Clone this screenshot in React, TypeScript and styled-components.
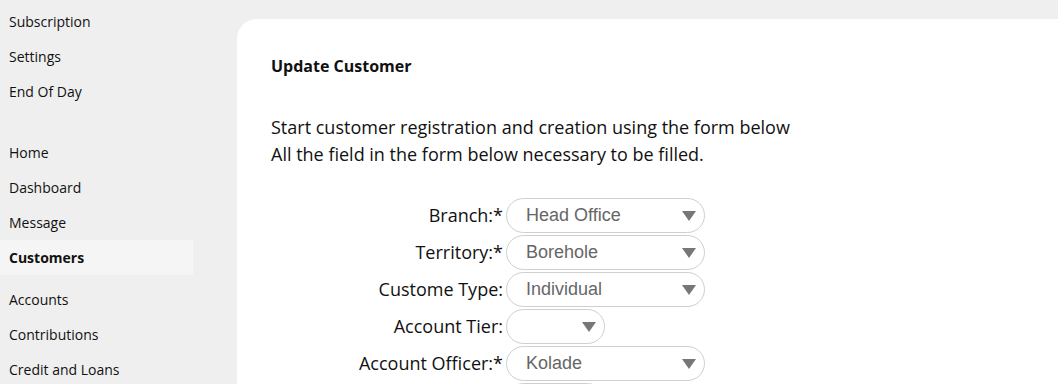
import React from "react";
import styled, { createGlobalStyle } from "styled-components";

type Field = {
  label: string;
  value: string;
  required?: boolean;
  narrow?: boolean;
};

const fields: Field[] = [
  { label: "Branch:", value: "Head Office", required: true },
  { label: "Territory:", value: "Borehole", required: true },
  { label: "Custome Type:", value: "Individual" },
  { label: "Account Tier:", value: "", narrow: true },
  { label: "Account Officer:", value: "Kolade", required: true },
  { label: "", value: "", narrow: true },
];

const menuTop = ["Subscription", "Settings", "End Of Day"];
const menuMain = ["Home", "Dashboard", "Message", "Customers", "Accounts", "Contributions", "Credit and Loans"];

const GlobalStyle = createGlobalStyle`
  html, body {
    margin: 0;
    padding: 0;
    background: #efefef;
    overflow: hidden;
  }
  body {
    font-family: "Open Sans", "Noto Sans", sans-serif;
    color: #111;
  }
`;

const Page = styled.div`
  display: flex;
  width: 1058px;
  height: 384px;
  overflow: hidden;
`;

const Sidebar = styled.nav`
  width: 237px;
  flex-shrink: 0;
  padding-top: 4px;
  display: flex;
  flex-direction: column;
`;

const MenuGroup = styled.ul`
  list-style: none;
  margin: 0 0 26px 0;
  padding: 0;
`;

const MenuItem = styled.li<{ $active?: boolean }>`
  width: 193px;
  height: 35px;
  display: flex;
  align-items: center;
  padding-left: 9px;
  box-sizing: border-box;
  font-size: 14px;
  font-weight: ${(p) => (p.$active ? 700 : 400)};
  background: ${(p) => (p.$active ? "#f5f5f5" : "transparent")};
  margin-bottom: ${(p) => (p.$active ? "7px" : "0")};
`;

const Main = styled.main`
  flex: 1;
  padding-top: 19px;
`;

const Card = styled.section`
  background: #fff;
  border-top-left-radius: 20px;
  height: 100%;
  padding: 36px 34px 0 34px;
  box-sizing: border-box;
`;

const Title = styled.h2`
  margin: 0;
  font-size: 16px;
  line-height: 22px;
  font-weight: 700;
`;

const Intro = styled.p`
  margin: 37px 0 30px 0;
  font-size: 18px;
  line-height: 27px;
`;

const Form = styled.div`
  display: grid;
  grid-template-columns: 232px auto;
  column-gap: 3px;
  row-gap: 2px;
  justify-content: start;
`;

const Label = styled.label`
  text-align: right;
  font-size: 18px;
  line-height: 35px;
  white-space: nowrap;
`;

const SelectBox = styled.div<{ $narrow?: boolean }>`
  width: ${(p) => (p.$narrow ? "99px" : "199px")};
  height: 35px;
  box-sizing: border-box;
  border: 1px solid #cfcfcf;
  border-radius: 18px;
  display: flex;
  align-items: center;
  justify-content: space-between;
  padding: 0 8px 0 19px;
  font-family: "Liberation Sans", Arial, sans-serif;
  font-size: 18px;
  color: #666;
`;

const Arrow = () => (
  <svg width="14" height="10" viewBox="0 0 14 10">
    <path d="M0 0 L14 0 L7 10 Z" fill="#777" />
  </svg>
);

export default function App() {
  return (
    <Page>
      <GlobalStyle />
      <Sidebar>
        <MenuGroup>
          {menuTop.map((m) => (
            <MenuItem key={m}>{m}</MenuItem>
          ))}
        </MenuGroup>
        <MenuGroup>
          {menuMain.map((m) => (
            <MenuItem key={m} $active={m === "Customers"}>
              {m}
            </MenuItem>
          ))}
        </MenuGroup>
      </Sidebar>
      <Main>
        <Card>
          <Title>Update Customer</Title>
          <Intro>
            Start customer registration and creation using the form below
            <br />
            All the field in the form below necessary to be filled.
          </Intro>
          <Form>
            {fields.map((f, i) => (
              <React.Fragment key={i}>
                <Label>
                  {f.label}
                  {f.required ? "*" : ""}
                </Label>
                <SelectBox $narrow={f.narrow}>
                  <span>{f.value}</span>
                  <Arrow />
                </SelectBox>
              </React.Fragment>
            ))}
          </Form>
        </Card>
      </Main>
    </Page>
  );
}
